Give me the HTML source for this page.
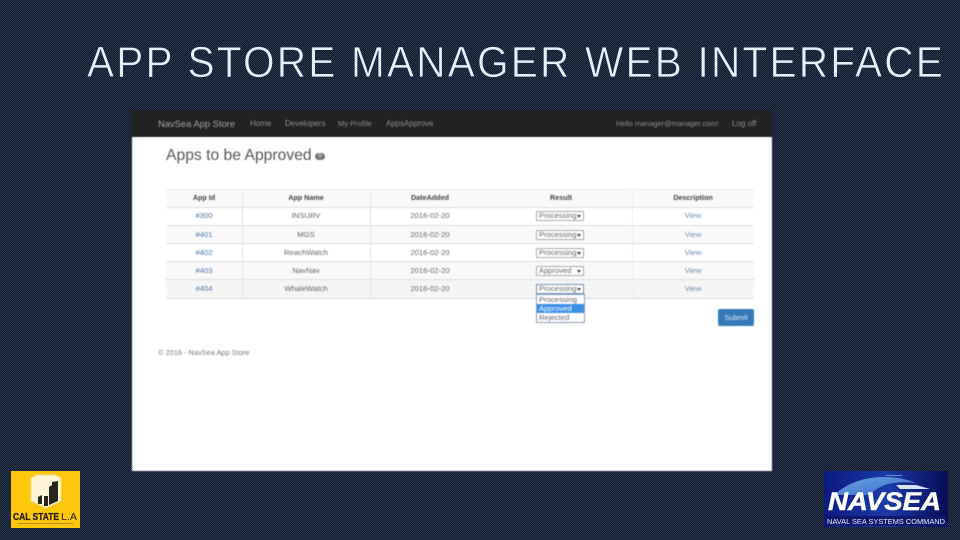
<!DOCTYPE html>
<html><head><meta charset="utf-8"><style>
html,body{margin:0;padding:0}
body{width:960px;height:540px;position:relative;overflow:hidden;background-color:#1a2438;background-image:repeating-conic-gradient(#0d1729 0 25%,#2d3a52 0 50%);background-size:2px 2px;font-family:"Liberation Sans",sans-serif}
.a{position:absolute;white-space:nowrap}
#app{left:132px;top:110px;width:640px;height:361px;background:#fff;overflow:hidden;filter:blur(.4px)}
#nav{left:0;top:0;width:640px;height:27px;background:#222}
#nav .a{font-size:8px;line-height:10px;color:#8e8e8e;top:9px}
.row{left:34px;width:588px;border-top:1px solid #ddd;box-sizing:border-box}
.c{position:absolute;top:3px;font-size:7.7px;line-height:9px;color:#666;text-align:center;white-space:nowrap}
.r .c{top:4px}
.c1{left:0;width:76px;color:#4a78a8}.c2{left:76px;width:128px}.c3{left:204px;width:120px}.c5{left:466px;width:122px;color:#6a8cb0}
.h .c{color:#444;font-weight:bold;font-size:7.2px;top:3px}
.v{position:absolute;top:0;bottom:0;width:1px;background:#e2e2e2}
.sel{position:absolute;left:370px;top:3px;width:48px;height:10px;box-sizing:border-box;border:1px solid #aaa;background:#fff;font-size:7.6px;line-height:8px;color:#666;padding-left:2px;white-space:nowrap}
.r .sel{top:4px}
.sel i{position:absolute;right:2px;top:3px;width:0;height:0;border:2px solid transparent;border-top:3px solid #444;border-bottom:0}
</style></head><body>
<svg class="a" style="left:0;top:0" width="960" height="90">
<text x="87" y="77" font-family="Liberation Sans" font-size="44" letter-spacing="2.4" fill="#e4f0fb" stroke="#1a2438" stroke-width=".7" textLength="858" lengthAdjust="spacingAndGlyphs">APP STORE MANAGER WEB INTERFACE</text>
</svg>
<div class="a" id="app">
<div class="a" id="nav">
<div class="a" style="left:26px;top:8px;font-size:9.4px;line-height:12px;color:#a5a5a5">NavSea App Store</div>
<div class="a" style="left:118px">Home</div>
<div class="a" style="left:153px">Developers</div>
<div class="a" style="left:206px;font-size:7.6px">My Profile</div>
<div class="a" style="left:254px;font-size:7.9px">AppsApprove</div>
<div class="a" style="left:484px;font-size:7.4px">Hello manager@manager.com!</div>
<div class="a" style="left:600px">Log off</div>
</div>
<div class="a" style="left:34px;top:37px;font-size:15.7px;line-height:18px;color:#555">Apps to be Approved</div>
<div class="a" style="left:183px;top:43px;width:10px;height:7px;border-radius:4px;background:#777;color:#fff;font-size:6px;line-height:7px;text-align:center">5</div>

<div class="a row h" style="top:79px;height:18px;background:#f9f9f9;border-top:1px solid #eee"><div class="c c1">App Id</div><div class="c c2">App Name</div><div class="c c3">DateAdded</div><div class="c" style="left:334px;width:122px">Result</div><div class="c c5" style="color:#444">Description</div></div>
<div class="a row" style="top:97px;height:18px;background:#fff"><div class="c c1">#300</div><div class="c c2">INSURV</div><div class="c c3">2016-02-20</div><div class="sel">Processing<i></i></div><div class="c c5">View</div></div>
<div class="a row r" style="top:115px;height:18px;background:#f9f9f9"><div class="c c1">#401</div><div class="c c2">MGS</div><div class="c c3">2016-02-20</div><div class="sel">Processing<i></i></div><div class="c c5">View</div></div>
<div class="a row r" style="top:133px;height:18px;background:#fff"><div class="c c1">#402</div><div class="c c2">ReachWatch</div><div class="c c3">2016-02-20</div><div class="sel">Processing<i></i></div><div class="c c5">View</div></div>
<div class="a row r" style="top:151px;height:18px;background:#f9f9f9"><div class="c c1">#403</div><div class="c c2">NavNav</div><div class="c c3">2016-02-20</div><div class="sel">Approved<i></i></div><div class="c c5">View</div></div>
<div class="a row r" style="top:169px;height:20px;background:#f5f5f5;border-bottom:1px solid #ddd"><div class="c c1">#404</div><div class="c c2">WhaleWatch</div><div class="c c3">2016-02-20</div><div class="sel" style="border-color:#6d8fb5">Processing<i></i></div><div class="c c5">View</div></div>
<div class="a" style="left:34px;top:79px;width:588px;height:109px">
<div class="v" style="left:76px"></div><div class="v" style="left:204px"></div><div class="v" style="left:466px;background:#eee"></div>
</div>

<div class="a" style="left:404px;top:184px;width:49px;height:29px;box-sizing:border-box;border:1px solid #8a9fb8;background:#fff;font-size:7.7px;line-height:9px;color:#666">
<div style="padding-left:2px">Processing</div>
<div style="padding-left:2px;background:#3d8ee6;color:#fff">Approved</div>
<div style="padding-left:2px">Rejected</div>
</div>
<div class="a" style="left:586px;top:199px;width:36px;height:17px;border-radius:2px;background:#337ab7;color:#dce8f3;font-size:7.5px;line-height:17px;text-align:center">Submit</div>
<div class="a" style="left:26px;top:238px;font-size:7.4px;line-height:9px;color:#777">© 2016 - NavSea App Store</div>
</div>

<svg class="a" style="left:11px;top:471px" width="69" height="57" viewBox="0 0 69 57">
<rect width="69" height="57" fill="#fdc70c"/>
<path d="M20 7 L26 4 H44 L50 7 V30 L35 37 L20 30Z" fill="#fff6d8" stroke="#f3df90"/>
<path d="M27 33V26L31 24V33Z M33 35V25H37V35Z" fill="#26261c"/>
<path d="M38 34V16L41 14V11L47 10V30Z" fill="#26261c"/>
<text x="2" y="49" font-family="Liberation Sans" font-size="9.8" font-weight="bold" stroke="#2a2410" stroke-width=".3" fill="#2a2410" textLength="46" lengthAdjust="spacingAndGlyphs">CAL STATE</text>
<text x="50" y="49" font-family="Liberation Sans" font-size="9.8" fill="#2a2410" textLength="16" lengthAdjust="spacingAndGlyphs">L.A</text>
<rect x="7" y="52" width="55" height="1" fill="#b8900f"/>
</svg>

<svg class="a" style="left:824px;top:471px" width="124" height="56" viewBox="0 0 124 56">
<defs><linearGradient id="g" x1="0" x2="1" y1="0" y2="0"><stop offset="0" stop-color="#0a1a80"/><stop offset=".5" stop-color="#1c3aa8"/><stop offset="1" stop-color="#070d55"/></linearGradient>
<linearGradient id="w" x1="0" x2="1" y1="0" y2="1"><stop offset="0" stop-color="#6ea6e4"/><stop offset="1" stop-color="#3668c4"/></linearGradient></defs>
<rect width="124" height="56" fill="url(#g)"/>
<path d="M10 24 Q30 6 60 6 Q78 6 92 12 Q60 8 46 24Z" fill="url(#w)"/>
<path d="M72 14 L92 14 L106 18 L76 18Z" fill="#d4e3f6"/>
<path d="M62 4 H78 V5 H62Z" fill="#6d8ec8"/>
<text x="4" y="39" font-family="Liberation Sans" font-size="25" font-weight="bold" font-style="italic" fill="#fff" stroke="#fff" stroke-width=".5" textLength="113" lengthAdjust="spacingAndGlyphs">NAVSEA</text>
<rect x="2" y="45" width="120" height="10" fill="#10186a"/>
<text x="3" y="53" font-family="Liberation Sans" font-size="7.4" fill="#e6ecf8" textLength="118" lengthAdjust="spacingAndGlyphs">NAVAL SEA SYSTEMS COMMAND</text>
</svg>
</body></html>
